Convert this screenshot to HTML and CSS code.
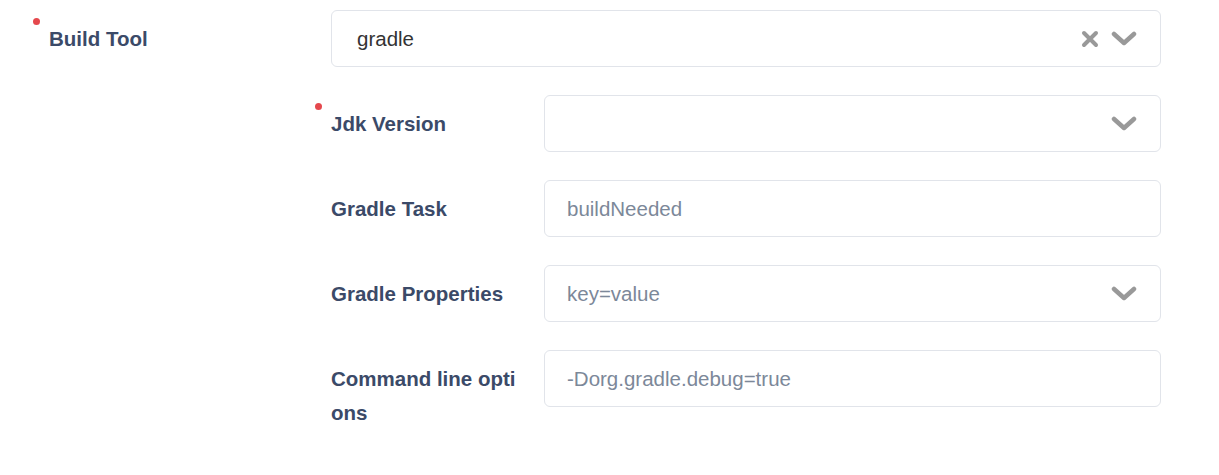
FILE: index.html
```html
<!DOCTYPE html>
<html>
	<head>
		<meta charset="UTF-8">
		<title>Build Tool</title>
		<link rel="stylesheet" href="styles.css">
	</head>
	<body>
		<div class="form">
			<div class="item">
				<label class="label required">Build Tool</label>
				<div class="box select">
					<span class="value">gradle</span>
					<span class="icons">
						<svg class="clear" width="18" height="18" viewBox="0 0 18 18"><path d="M3 3L15 15M15 3L3 15" stroke="#999" stroke-width="4" stroke-linecap="round"/></svg>
						<svg class="arrow" width="26" height="16" viewBox="0 0 26 16"><path d="M3 3L13 12L23 3" fill="none" stroke="#999" stroke-width="4.5" stroke-linecap="round" stroke-linejoin="round"/></svg>
					</span>
				</div>
			</div>
			<div class="sub">
				<div class="item">
					<label class="label required">Jdk Version</label>
					<div class="box select">
						<span class="value"></span>
						<span class="icons">
							<svg class="arrow" width="26" height="16" viewBox="0 0 26 16"><path d="M3 3L13 12L23 3" fill="none" stroke="#999" stroke-width="4.5" stroke-linecap="round" stroke-linejoin="round"/></svg>
						</span>
					</div>
				</div>
				<div class="item">
					<label class="label">Gradle Task</label>
					<div class="box">
						<span class="placeholder">buildNeeded</span>
					</div>
				</div>
				<div class="item">
					<label class="label">Gradle Properties</label>
					<div class="box select">
						<span class="placeholder">key=value</span>
						<span class="icons">
							<svg class="arrow" width="26" height="16" viewBox="0 0 26 16"><path d="M3 3L13 12L23 3" fill="none" stroke="#999" stroke-width="4.5" stroke-linecap="round" stroke-linejoin="round"/></svg>
						</span>
					</div>
				</div>
				<div class="item">
					<label class="label">Command line options</label>
					<div class="box">
						<span class="placeholder">-Dorg.gradle.debug=true</span>
					</div>
				</div>
			</div>
		</div>
	</body>
</html>
```

FILE: styles.css
```css
body {
	margin: 0;
	background: #fff;
	font-family: "Liberation Sans", Arial, sans-serif;
}

.form {
	padding: 10px 58px 0 49px;
}

.item {
	display: flex;
	align-items: flex-start;
	margin-bottom: 28px;
}

.label {
	position: relative;
	flex: none;
	width: 282px;
	padding-top: 12px;
	padding-right: 20px;
	box-sizing: border-box;
	font-size: 20.5px;
	font-weight: bold;
	line-height: 34px;
	color: #3b4a68;
	word-break: break-all;
}

.required:before {
	content: "";
	position: absolute;
	left: -16px;
	top: 8px;
	width: 7px;
	height: 7px;
	border-radius: 50%;
	background: #e5484d;
}

.sub {
	margin-left: 282px;
}

.sub .label {
	width: 213px;
}

.box {
	flex: 1;
	height: 57px;
	display: flex;
	align-items: center;
	padding: 0 23px 0 22px;
	box-sizing: border-box;
	border: 1px solid #e1e4ea;
	border-radius: 6px;
	font-size: 20.5px;
}

.value {
	flex: 1;
	padding-left: 3px;
	color: #333;
}

.placeholder {
	flex: 1;
	color: #7c8899;
}

.icons {
	display: flex;
	align-items: center;
	gap: 12px;
}

.icons svg {
	display: block;
}
```
